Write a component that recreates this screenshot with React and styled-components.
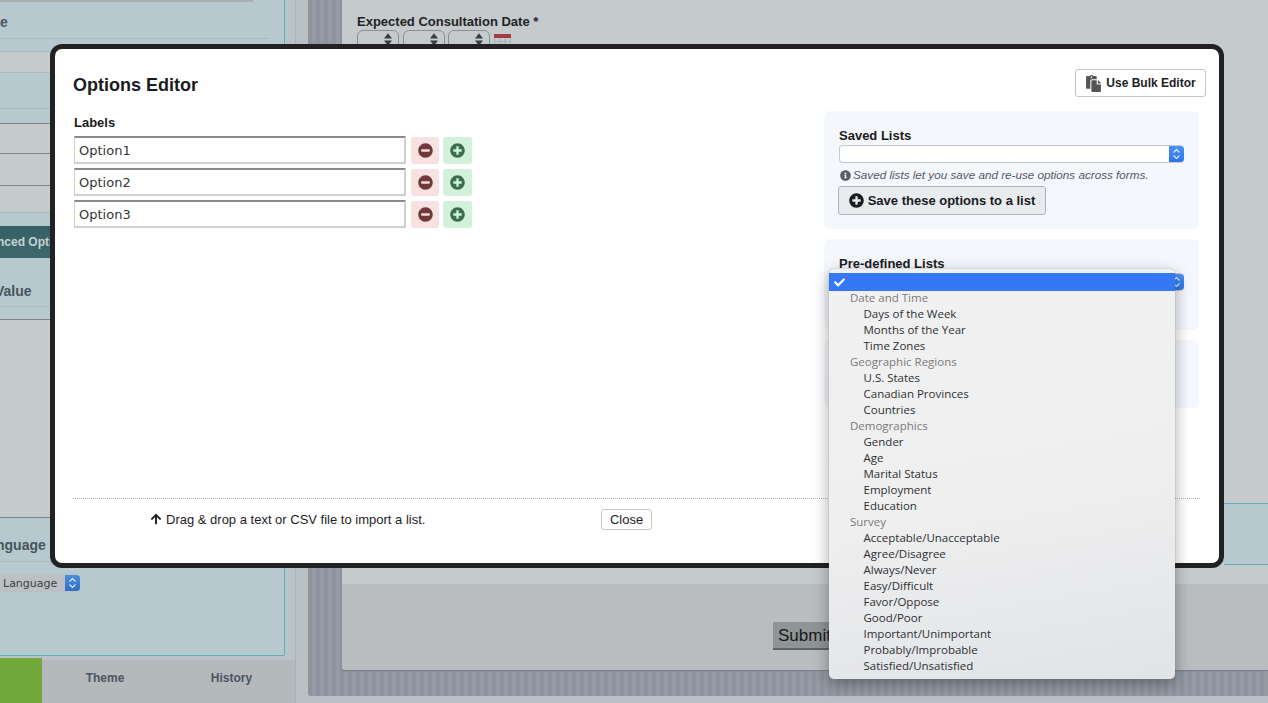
import React from 'react';
import styled, { createGlobalStyle } from 'styled-components';
import {
  FaPaste, FaMinusCircle, FaPlusCircle, FaInfoCircle, FaArrowUp, FaCheck,
} from 'react-icons/fa';

const GlobalStyle = createGlobalStyle`
  html, body {
    margin: 0;
    padding: 0;
    background: #c5cacc;
  }
  body {
    font-family: "Liberation Sans", Arial, sans-serif;
    color: #1d1d1f;
  }
`;

const Page = styled.div`
  position: relative;
  display: flex;
  width: 1268px;
  height: 703px;
  overflow: hidden;
`;

/* dimmed page behind the modal */
const Sidebar = styled.aside`
  width: 296px;
  flex: none;
  display: flex;
  flex-direction: column;
  background: #bac3c8;
  border-right: 1px solid #adb3b6;
  box-sizing: border-box;
`;

const SidePanel = styled.div`
  width: 285px;
  height: 656px;
  box-sizing: border-box;
  background: #b6c9cf;
  border-right: 1px solid #5fb0b8;
  border-bottom: 1px solid #5fb0b8;
  border-bottom-right-radius: 2px;
  overflow: hidden;
`;

const Band = styled.div`
  height: ${(p) => p.$h}px;
  box-sizing: border-box;
  background: ${(p) => p.$bg || 'transparent'};
  border-top: ${(p) => (p.$top ? `1px solid ${p.$top}` : 'none')};
  border-bottom: ${(p) => (p.$bottom ? `1px solid ${p.$bottom}` : 'none')};
  width: ${(p) => p.$w || '100%'};
`;

const SideHeading = styled.div`
  height: ${(p) => p.$h}px;
  line-height: ${(p) => p.$h + p.$pt}px;
  box-sizing: border-box;
  text-indent: ${(p) => p.$indent || 0}px;
  font-size: 14px;
  font-weight: bold;
  color: #47545e;
  white-space: nowrap;
  overflow: hidden;
  border-bottom: 1px solid #a9bac0;
  width: 269px;
`;

const AdvancedBar = styled.div`
  height: 32px;
  line-height: 32px;
  text-indent: -3px;
  overflow: hidden;
  background: linear-gradient(#356064, #3f686c);
  color: #c3d3d6;
  font-size: 12px;
  font-weight: bold;
  white-space: nowrap;
`;

const SelectBox = styled.div`
  display: flex;
  align-items: center;
  box-sizing: border-box;
  height: 18px;
  width: ${(p) => p.$w}px;
  background: ${(p) => p.$bg || '#fff'};
  border: 1px solid ${(p) => p.$edge || '#c4c8cc'};
  border-right: none;
  border-radius: 4px;
  overflow: hidden;
  font-family: "DejaVu Sans", sans-serif;
  font-size: 11px;
  color: #3a4046;
`;

const SelectText = styled.span`
  flex: 1;
  padding-left: 2px;
`;

const SelectCap = styled.span`
  width: 15px;
  height: 18px;
  flex: none;
  display: flex;
  align-items: center;
  justify-content: center;
  background: linear-gradient(${(p) => p.$from}, ${(p) => p.$to});
`;

const Chevrons = () => (
  <svg width="9" height="12" viewBox="0 0 9 12" fill="none" stroke="#e6effc" strokeWidth="1.1">
    <path d="M1.5 4.5 4.5 1.5 7.5 4.5" />
    <path d="M1.5 7.5 4.5 10.5 7.5 7.5" />
  </svg>
);

const Tabs = styled.div`
  flex: 1;
  margin-top: 2px;
  display: flex;
  align-items: stretch;
`;

const Tab = styled.div`
  width: ${(p) => p.$w}px;
  display: flex;
  align-items: center;
  justify-content: center;
  font-size: 12px;
  font-weight: bold;
  color: #4c5661;
  background: ${(p) => (p.$active ? '#71a83a' : '#b4b9bb')};
  margin-top: ${(p) => (p.$active ? 0 : 2)}px;
  padding-bottom: 8px;
`;

const Stage = styled.main`
  flex: 1;
  min-width: 0;
  background: #b9c1c5;
  padding: 0 0 7px 12px;
  display: flex;
`;

const Stripes = styled.div`
  flex: 1;
  min-width: 0;
  padding-left: 34px;
  padding-bottom: 26px;
  display: flex;
  border-bottom-left-radius: 3px;
  background: repeating-linear-gradient(90deg, #8e949f 0 4px, #959ba5 4px 8px);
`;

const FormCard = styled.div`
  flex: 1;
  min-width: 0;
  display: flex;
  flex-direction: column;
  border-bottom-left-radius: 3px;
  box-shadow: 0 1px 1px #787d84;
  overflow: hidden;
`;

const FormTop = styled.div`
  height: 584px;
  box-sizing: border-box;
  background: #c5cacc;
  padding: 14px 0 19px 15px;
  display: flex;
  flex-direction: column;
`;

const FieldLabel = styled.div`
  font-size: 13px;
  font-weight: bold;
  line-height: 15px;
  color: #1f2326;
`;

const DateRow = styled.div`
  display: flex;
  align-items: flex-start;
  gap: 3.5px;
  margin-top: 1px;
`;

const Spinner = styled.div`
  width: 42px;
  height: 24px;
  box-sizing: border-box;
  border: 1px solid #8b8f92;
  border-radius: 6px;
  display: flex;
  justify-content: flex-end;
  padding: 2px 6px 0 0;
`;

const CalendarIcon = () => (
  <svg width="17" height="14" viewBox="0 0 17 14" style={{ marginTop: 4 }}>
    <rect x="0" y="0" width="17" height="4" fill="#a33a44" />
    <path d="M0.5 4v10M6 4v10M11 4v10M16.5 4v10M0 7.5h17M0 11h17" stroke="#aeb2b5" fill="none" />
  </svg>
);

const AnswerBand = styled.div`
  margin-top: auto;
  height: 62px;
  margin-left: 867px;
  box-sizing: border-box;
  background: #b6c9cf;
  border-top: 1px solid #5fb0b8;
  border-bottom: 1px solid #5fb0b8;
`;

const FormBottom = styled.div`
  flex: 1;
  background: #b9bdbf;
  display: flex;
  justify-content: center;
  align-items: flex-start;
  padding-top: 38px;
`;

const SubmitButton = styled.div`
  width: 64px;
  height: 28px;
  box-sizing: border-box;
  background: #8f9496;
  border-bottom: 2px solid #5f6365;
  padding-left: 5px;
  font-size: 17px;
  line-height: 27px;
  color: #17191a;
  white-space: nowrap;
  overflow: hidden;
`;

/* modal */
const Modal = styled.section`
  position: absolute;
  top: 44px;
  left: 50px;
  width: 1174px;
  height: 524px;
  box-sizing: border-box;
  background: #fff;
  border: 5px solid #222;
  border-radius: 12px;
  display: flex;
  flex-direction: column;
`;

const ModalHeader = styled.header`
  height: 62px;
  flex: none;
  box-sizing: border-box;
  padding: 20px 13px 0 18px;
  display: flex;
  justify-content: space-between;
  align-items: flex-start;
`;

const ModalTitle = styled.h1`
  margin: 0;
  font-size: 18px;
  line-height: 32px;
  font-weight: bold;
  color: #1b1b1d;
`;

const BulkButton = styled.button`
  width: 131px;
  height: 28px;
  box-sizing: border-box;
  background: #fff;
  border: 1px solid #c4c4c4;
  border-radius: 3px;
  padding: 0;
  display: flex;
  align-items: center;
  justify-content: center;
  gap: 4px;
  font: bold 12px "Liberation Sans", Arial, sans-serif;
  color: #1d1d1f;
  svg { color: #555; }
`;

const ModalBody = styled.div`
  flex: 1;
  display: flex;
  justify-content: space-between;
  padding: 0 20px 0 19px;
`;

const LabelsColumn = styled.div`
  padding-top: 4px;
`;

const ColumnLabel = styled.div`
  font-size: 13px;
  font-weight: bold;
  line-height: 15px;
  margin-bottom: 6px;
  color: #1b1b1d;
`;

const OptionRow = styled.div`
  display: flex;
  align-items: center;
  height: 28px;
  margin-bottom: 4px;
`;

const OptionInput = styled.div`
  width: 332px;
  height: 28px;
  box-sizing: border-box;
  border: 1px solid #cfcfcf;
  border-width: 1px 2px 2px 1px;
  border-top: 2px solid #8a8a8a;
  padding-left: 4px;
  font-family: "DejaVu Sans", sans-serif;
  font-size: 13px;
  line-height: 26px;
  color: #33363a;
`;

const RowButton = styled.button`
  width: ${(p) => (p.$add ? 29 : 28)}px;
  height: 27px;
  margin: 1px 0 0 ${(p) => p.$gap}px;
  padding: 0;
  border: none;
  border-radius: 3px;
  display: flex;
  align-items: center;
  justify-content: center;
  font-size: 15px;
  background: ${(p) => (p.$add ? '#d3f0da' : '#f7e1e1')};
  color: ${(p) => (p.$add ? '#37704a' : '#703a3a')};
`;

const ListsColumn = styled.div`
  width: 375px;
  display: flex;
  flex-direction: column;
  gap: 10px;
`;

const ListPanel = styled.div`
  position: relative;
  height: ${(p) => p.$h}px;
  box-sizing: border-box;
  padding: 17px 15px 0;
  background: #f4f7fc;
  border-radius: 6px;
`;

const PanelTitle = styled.div`
  font-size: 13px;
  font-weight: bold;
  line-height: 15px;
  margin-bottom: 2px;
  color: #1b1b1d;
`;

const HelpText = styled.div`
  display: flex;
  align-items: center;
  gap: 2px;
  margin: 4px 0 3px 1px;
  font-size: 11.7px;
  line-height: 16px;
  font-style: italic;
  color: #555a60;
  svg { color: #5b5f63; font-size: 11px; }
`;

const SaveButton = styled.button`
  width: 208px;
  height: 29px;
  margin-left: -1px;
  box-sizing: border-box;
  background: #e9ecef;
  border: 1px solid #b1b4b8;
  border-radius: 3px;
  padding: 0;
  display: flex;
  align-items: center;
  justify-content: center;
  gap: 4px;
  font: bold 13px "Liberation Sans", Arial, sans-serif;
  color: #1b1b1d;
  svg { font-size: 15px; }
`;

const Dropdown = styled.div`
  position: absolute;
  z-index: 2;
  top: 30px;
  left: 5px;
  width: 346px;
  height: 410px;
  box-sizing: border-box;
  padding-top: 4px;
  border-radius: 5px;
  background: linear-gradient(170deg, #f1f1f1 0%, #efefef 55%, #e1e3e7 100%);
  box-shadow: 0 0 1px #777, 0 5px 16px rgba(0, 0, 0, 0.35);
  font-family: "Open Sans", sans-serif;
  font-size: 11.5px;
  line-height: 16px;
`;

const SelectedRow = styled.div`
  height: 18px;
  margin-bottom: -1px;
  padding-left: 5px;
  display: flex;
  align-items: center;
  background: #3478f6;
  color: #fff;
  font-size: 11px;
`;

const GroupLabel = styled.div`
  padding-left: 21px;
  color: #7a7a7c;
`;

const GroupOption = styled.div`
  padding-left: 34.5px;
  color: #2e3034;
`;

const ModalFooter = styled.footer`
  height: 65px;
  flex: none;
  box-sizing: border-box;
  margin: 0 19px 0 18px;
  border-top: 1px dotted #b5b5b5;
  display: flex;
  align-items: flex-start;
  padding: 10px 0 0 77px;
`;

const DropHint = styled.div`
  width: 451px;
  display: flex;
  align-items: center;
  gap: 4px;
  height: 20px;
  font-size: 13px;
  color: #1d1d1f;
  svg { font-size: 12px; }
`;

const CloseButton = styled.button`
  width: 51px;
  height: 21px;
  box-sizing: border-box;
  background: #fff;
  border: 1px solid #c8c8c8;
  border-radius: 3px;
  padding: 0;
  font: 13px "Liberation Sans", Arial, sans-serif;
  color: #1d1d1f;
`;

const optionLabels = ['Option1', 'Option2', 'Option3'];

const listGroups = [
  { label: 'Date and Time', options: ['Days of the Week', 'Months of the Year', 'Time Zones'] },
  { label: 'Geographic Regions', options: ['U.S. States', 'Canadian Provinces', 'Countries'] },
  { label: 'Demographics', options: ['Gender', 'Age', 'Marital Status', 'Employment', 'Education'] },
  {
    label: 'Survey',
    options: [
      'Acceptable/Unacceptable', 'Agree/Disagree', 'Always/Never', 'Easy/Difficult', 'Favor/Oppose',
      'Good/Poor', 'Important/Unimportant', 'Probably/Improbable', 'Satisfied/Unsatisfied',
    ],
  },
];

const App = () => (
  <>
    <GlobalStyle />
    <Page>
      <Sidebar>
        <SidePanel>
          <Band $h={2} $bg="#a9b0b4" $w="253px" />
          <SideHeading $h={37} $pt={4}>e</SideHeading>
          <Band $h={12} />
          <Band $h={22} $bg="#c5cacc" $top="#a9bac0" $bottom="#a9bac0" />
          <Band $h={36} $bottom="#a9bac0" />
          <Band $h={14} />
          <Band $h={30} $bg="#c5cacc" $top="#7f8688" />
          <Band $h={32} $bg="#c5cacc" $top="#7f8688" />
          <Band $h={27} $bg="#c5cacc" $top="#7f8688" />
          <Band $h={14} $top="#a9bac0" />
          <AdvancedBar>nced Opti</AdvancedBar>
          <SideHeading $h={49} $pt={18} $indent={-5}>Value</SideHeading>
          <Band $h={12} />
          <Band $h={199} $bg="#c5cacc" $top="#7f8688" $bottom="#7f8688" />
          <SideHeading $h={44} $pt={10} $indent={-4}>nguage</SideHeading>
          <Band $h={12} />
          <SelectBox $w={80} $bg="#bcc0c2" $edge="#bcc0c2">
            <SelectText>Language</SelectText>
            <SelectCap $from="#4b8fe0" $to="#2c6cc6"><Chevrons /></SelectCap>
          </SelectBox>
        </SidePanel>
        <Tabs>
          <Tab $w={42} $active />
          <Tab $w={126}>Theme</Tab>
          <Tab $w={127}>History</Tab>
        </Tabs>
      </Sidebar>
      <Stage>
        <Stripes>
          <FormCard>
            <FormTop>
              <FieldLabel>Expected Consultation Date *</FieldLabel>
              <DateRow>
                {[0, 1, 2].map((n) => (
                  <Spinner key={n}>
                    <svg width="8" height="13" viewBox="0 0 9 14" fill="#3a3d40">
                      <path d="M4.5 0 9 6H0z" />
                      <path d="M0 8h9l-4.5 6z" />
                    </svg>
                  </Spinner>
                ))}
                <CalendarIcon />
              </DateRow>
              <AnswerBand />
            </FormTop>
            <FormBottom>
              <SubmitButton>Submit</SubmitButton>
            </FormBottom>
          </FormCard>
        </Stripes>
      </Stage>
      <Modal>
        <ModalHeader>
          <ModalTitle>Options Editor</ModalTitle>
          <BulkButton>
            <FaPaste size={17} />
            Use Bulk Editor
          </BulkButton>
        </ModalHeader>
        <ModalBody>
          <LabelsColumn>
            <ColumnLabel>Labels</ColumnLabel>
            {optionLabels.map((label) => (
              <OptionRow key={label}>
                <OptionInput>{label}</OptionInput>
                <RowButton $gap={5}><FaMinusCircle /></RowButton>
                <RowButton $gap={4} $add><FaPlusCircle /></RowButton>
              </OptionRow>
            ))}
          </LabelsColumn>
          <ListsColumn>
            <ListPanel $h={118}>
              <PanelTitle>Saved Lists</PanelTitle>
              <SelectBox $w={345}>
                <SelectText />
                <SelectCap $from="#4a94f7" $to="#2c72ea"><Chevrons /></SelectCap>
              </SelectBox>
              <HelpText>
                <FaInfoCircle />
                Saved lists let you save and re-use options across forms.
              </HelpText>
              <SaveButton>
                <FaPlusCircle />
                Save these options to a list
              </SaveButton>
            </ListPanel>
            <ListPanel $h={91}>
              <PanelTitle>Pre-defined Lists</PanelTitle>
              <SelectBox $w={345}>
                <SelectText />
                <SelectCap $from="#4a94f7" $to="#2c72ea"><Chevrons /></SelectCap>
              </SelectBox>
              <Dropdown>
                <SelectedRow><FaCheck /></SelectedRow>
                {listGroups.map((group) => (
                  <React.Fragment key={group.label}>
                    <GroupLabel>{group.label}</GroupLabel>
                    {group.options.map((option) => (
                      <GroupOption key={option}>{option}</GroupOption>
                    ))}
                  </React.Fragment>
                ))}
              </Dropdown>
            </ListPanel>
            <ListPanel $h={68} />
          </ListsColumn>
        </ModalBody>
        <ModalFooter>
          <DropHint>
            <FaArrowUp />
            Drag &amp; drop a text or CSV file to import a list.
          </DropHint>
          <CloseButton>Close</CloseButton>
        </ModalFooter>
      </Modal>
    </Page>
  </>
);

export default App;
